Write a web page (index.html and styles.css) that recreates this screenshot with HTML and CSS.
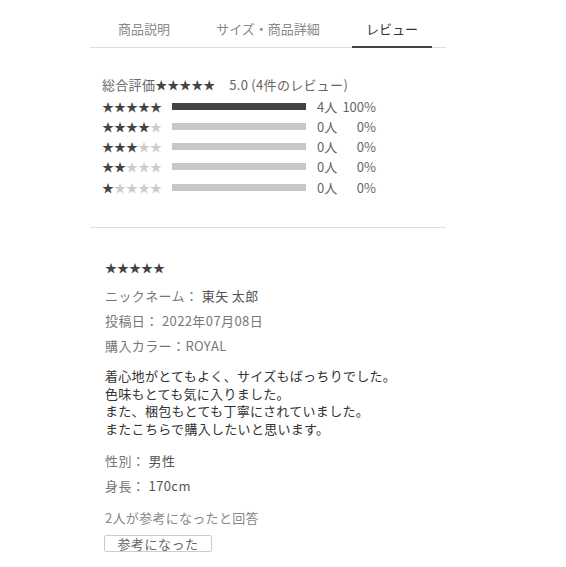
FILE: index.html
```html
<!DOCTYPE html>
<html>

<head>
    <meta charset="UTF-8">
    <meta name="viewport" content="width=device-width, initial-scale=1.0">
    <title>レビュー</title>

    <link rel="stylesheet" href="styles.css">
</head>

<body>
    <div class="item-tabs">
        <div class="tab-bar">
            <div class="tab">商品説明</div>
            <div class="tab">サイズ・商品詳細</div>
            <div class="tab active">レビュー</div>
        </div>

        <!-- summary of all reviews -->
        <div class="review-summary">
            <div class="summary-title">総合評価<span class="stars">★★★★★</span><span class="score">5.0 (4件のレビュー)</span></div>

            <div class="rate-row">
                <span class="stars">★★★★★</span>
                <span class="bar"><span class="bar-fill" style="width: 100%"></span></span>
                <span class="count">4人</span>
                <span class="percent">100%</span>
            </div>
            <div class="rate-row">
                <span class="stars">★★★★<span class="off">★</span></span>
                <span class="bar"></span>
                <span class="count">0人</span>
                <span class="percent">0%</span>
            </div>
            <div class="rate-row">
                <span class="stars">★★★<span class="off">★★</span></span>
                <span class="bar"></span>
                <span class="count">0人</span>
                <span class="percent">0%</span>
            </div>
            <div class="rate-row">
                <span class="stars">★★<span class="off">★★★</span></span>
                <span class="bar"></span>
                <span class="count">0人</span>
                <span class="percent">0%</span>
            </div>
            <div class="rate-row">
                <span class="stars">★<span class="off">★★★★</span></span>
                <span class="bar"></span>
                <span class="count">0人</span>
                <span class="percent">0%</span>
            </div>
        </div>

        <!-- single review -->
        <div class="review">
            <div class="review-stars">★★★★★</div>
            <div class="info">ニックネーム： <span class="value">東矢 太郎</span></div>
            <div class="info">投稿日： 2022年07月08日</div>
            <div class="info">購入カラー：ROYAL</div>

            <p class="review-text">着心地がとてもよく、サイズもばっちりでした。<br>色味もとても気に入りました。<br>また、梱包もとても丁寧にされていました。<br>またこちらで購入したいと思います。</p>

            <div class="profile">
                <div class="info">性別： <span class="value">男性</span></div>
                <div class="info">身長： <span class="value">170cm</span></div>
            </div>

            <div class="helpful">2人が参考になったと回答</div>
            <button class="helpful-btn">参考になった</button>
        </div>
    </div>
</body>

</html>
```

FILE: styles.css
```css
body {
    margin: 0;
    font-family: "Noto Sans CJK JP", "Noto Sans", sans-serif;
    background-color: #fff;
    color: #333;
}

.item-tabs {
    width: 356px;
    margin-left: 90px;
}

.tab-bar {
    display: flex;
    gap: 44px;
    padding-left: 14px;
    border-bottom: 1px solid #ddd;
}

.tab {
    width: 80px;
    text-align: center;
    white-space: nowrap;
    display: flex;
    justify-content: center;
    font-size: 13px;
    line-height: 20px;
    padding: 19px 0 7px;
    color: #888;
    border-bottom: 2px solid transparent;
    margin-bottom: -1px;
}

.tab.active {
    color: #333;
    border-bottom-color: #444;
}

.review-summary {
    padding: 27px 0 30px 12px;
    border-bottom: 1px solid #ddd;
    color: #666;
    font-size: 13px;
}

.summary-title {
    line-height: 20px;
    letter-spacing: 0.3px;
    margin-bottom: 1px;
}

.summary-title .stars {
    color: #444;
}

.score {
    margin-left: 14px;
}

.stars {
    font-size: 12px;
    letter-spacing: 0;
    color: #444;
}

.stars .off {
    color: #ccc;
}

.rate-row {
    display: flex;
    align-items: center;
    height: 20px;
    margin-top: 0.3px;
}

.rate-row .stars {
    width: 70px;
}

.bar {
    width: 134px;
    height: 7px;
    background: #c8c8c8;
    margin-right: 11px;
}

.bar-fill {
    display: block;
    height: 100%;
    background: #444;
}

.count {
    width: 24px;
}

.percent {
    width: 35px;
    text-align: right;
}

.review {
    padding: 30px 0 0 15px;
    font-size: 13px;
}

.review-stars {
    font-size: 12px;
    line-height: 20px;
    color: #444;
    margin-bottom: 5px;
}

.info {
    line-height: 25px;
    color: #777;
    letter-spacing: 0.4px;
}

.info .value {
    color: #555;
}

.review-text {
    margin: 9px 0 0;
    line-height: 17.5px;
    letter-spacing: 0.3px;
    color: #333;
}

.profile {
    margin-top: 11px;
}

.helpful {
    margin-top: 10px;
    line-height: 20px;
    color: #888;
    letter-spacing: 0.3px;
}

.helpful-btn {
    display: block;
    margin: 7px 0 0 -1px;
    width: 108px;
    height: 17px;
    padding: 0;
    font-family: inherit;
    font-size: 13px;
    line-height: 15px;
    letter-spacing: 0.5px;
    color: #666;
    background: #fff;
    border: 1px solid #ccc;
    border-radius: 2px;
}
```
